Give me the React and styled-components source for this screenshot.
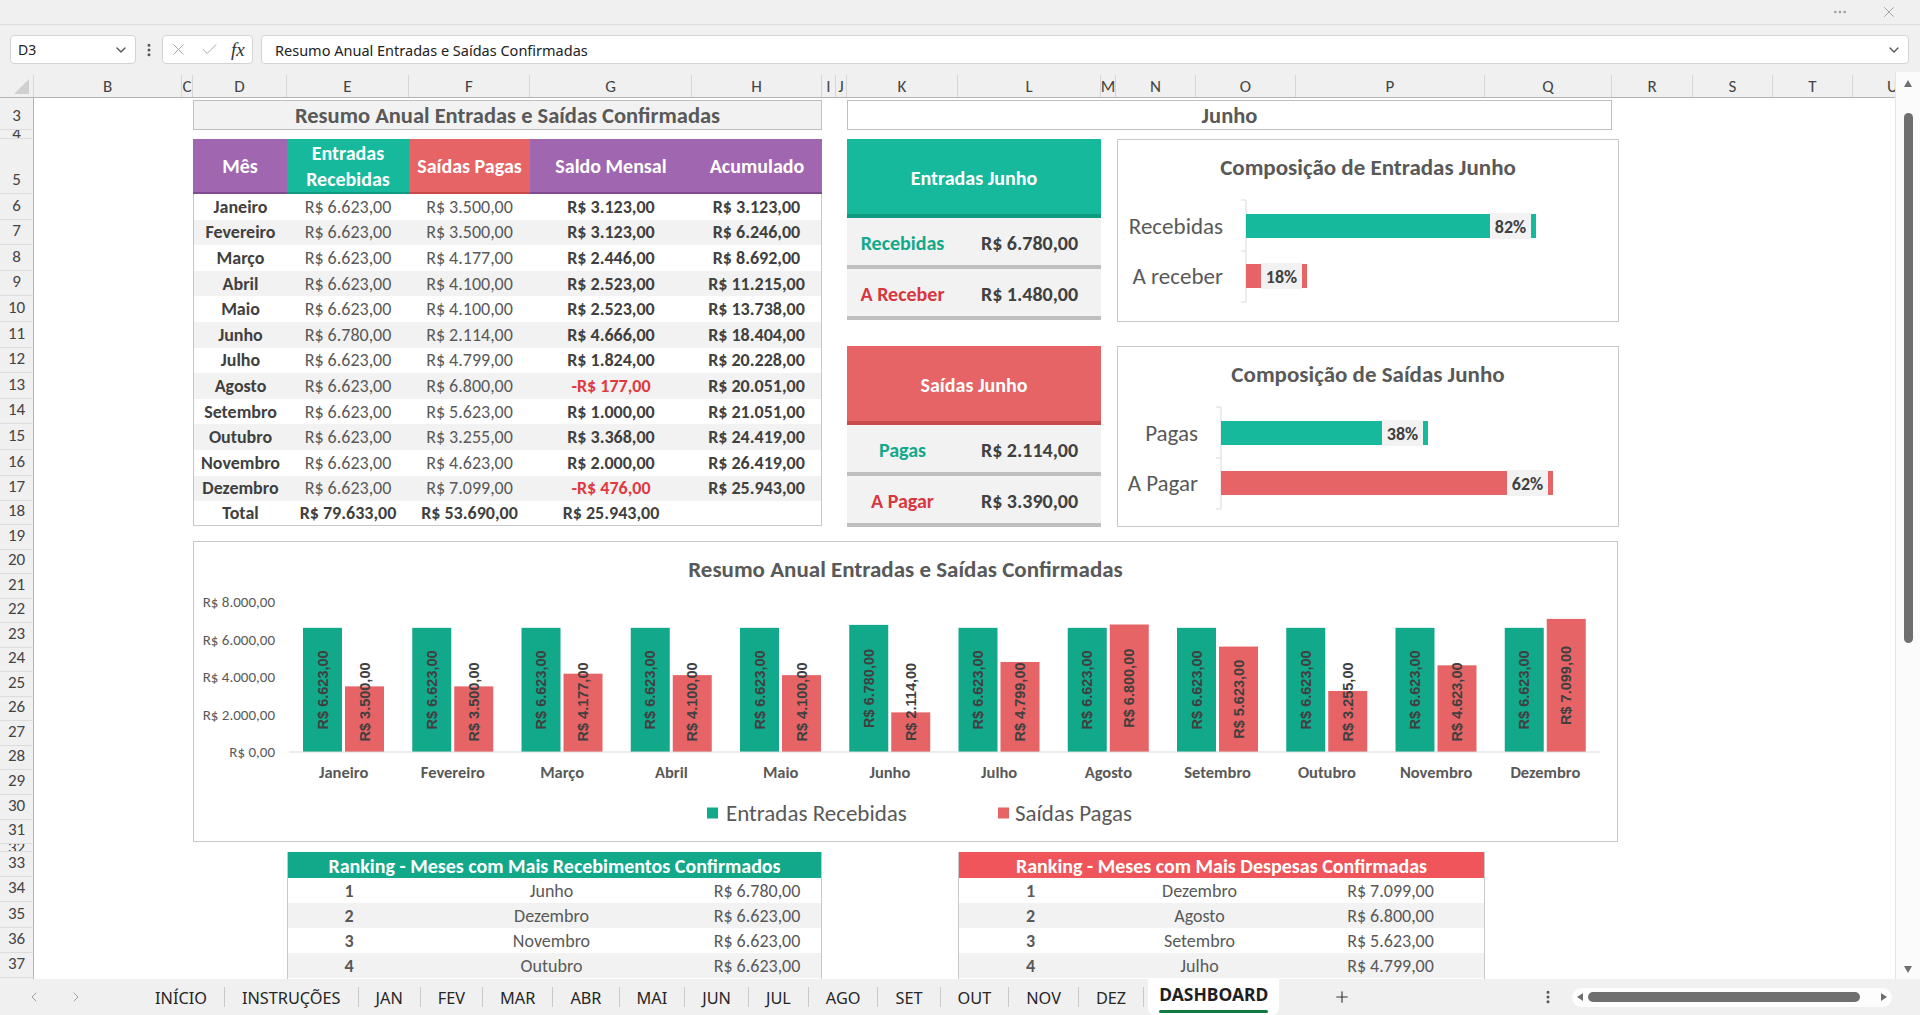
import React from "react";
import styled, { createGlobalStyle, css } from "styled-components";
import {
  ChevronDown,
  ChevronLeft,
  ChevronRight,
  X,
  Check,
  Plus,
  Ellipsis,
  EllipsisVertical,
} from "lucide-react";

const SHEET_FONT = `"Carlito", "Liberation Sans Narrow", "Liberation Sans", sans-serif`;
const UI_FONT = `"Noto Sans", "Open Sans", sans-serif`;
const LABEL_FONT = `"Liberation Sans", Arial, sans-serif`;

const TEAL = "#16b99b";
const TEAL_CHART = "#12a98b";
const RED = "#e66465";
const PURPLE = "#a066b0";
const INK = "#595959";
const INK_DARK = "#404040";
const GRAY_ROW = "#f2f2f2";
const FRAME = "#c8c8c8";

// colunas da planilha (largura em px)
const COLUMNS = [
  ["B", 148], ["C", 11], ["D", 94], ["E", 122], ["F", 121], ["G", 162], ["H", 130],
  ["I", 14], ["J", 11], ["K", 111], ["L", 143], ["M", 15], ["N", 80], ["O", 100],
  ["P", 189], ["Q", 127], ["R", 81], ["S", 80], ["T", 80], ["U", 80],
];
const COL_TEMPLATE = `34px ${COLUMNS.map(([, w]) => `${w}px`).join(" ")}`;
const col = (letter) => COLUMNS.findIndex(([l]) => l === letter) + 2;
const span = (a, b) => `${col(a)} / ${col(b) + 1}`;

// linhas visíveis (3 em diante)
const ROWS = [
  [3, 32], [4, 9], [5, 55],
  ...Array.from({ length: 12 }, (_, i) => [6 + i, 25.6]),
  [18, 24],
  ...Array.from({ length: 13 }, (_, i) => [19 + i, 24.54]),
  [32, 8],
  ...Array.from({ length: 6 }, (_, i) => [33 + i, 25.2]),
];
const ROW_TEMPLATE = ROWS.map(([, h]) => `${h}px`).join(" ");
const row = (n) => n - 2;
const rows = (a, b) => `${row(a)} / ${row(b) + 1}`;

const fmt = (n) => {
  const int = Math.floor(Math.abs(n))
    .toString()
    .replace(/\B(?=(\d{3})+(?!\d))/g, ".");
  return `${n < 0 ? "-" : ""}R$ ${int},00`;
};

const MONTHS = [
  "Janeiro", "Fevereiro", "Março", "Abril", "Maio", "Junho",
  "Julho", "Agosto", "Setembro", "Outubro", "Novembro", "Dezembro",
];
const ENTRADAS = [6623, 6623, 6623, 6623, 6623, 6780, 6623, 6623, 6623, 6623, 6623, 6623];
const SAIDAS = [3500, 3500, 4177, 4100, 4100, 2114, 4799, 6800, 5623, 3255, 4623, 7099];

const SUMMARY = MONTHS.map((m, i) => {
  const saldo = ENTRADAS[i] - SAIDAS[i];
  return { m, e: ENTRADAS[i], s: SAIDAS[i], saldo };
}).map((r, i, all) => ({
  ...r,
  acc: all.slice(0, i + 1).reduce((t, x) => t + x.saldo, 0),
}));

const TABS = [
  "INÍCIO", "INSTRUÇÕES", "JAN", "FEV", "MAR", "ABR", "MAI",
  "JUN", "JUL", "AGO", "SET", "OUT", "NOV", "DEZ",
];

const GlobalStyle = createGlobalStyle`
  html, body { margin: 0; padding: 0; }
  body { background: #f0f0f0; overflow: hidden; font-family: ${SHEET_FONT}; }
  * { box-sizing: border-box; }
`;

const placed = css`
  grid-column: ${(p) => p.$col};
  grid-row: ${(p) => p.$row};
`;

/* ---------- moldura do Excel ---------- */

const Window = styled.div`
  width: 1920px;
  height: 1015px;
  display: flex;
  flex-direction: column;
  background: #f0f0f0;
  overflow: hidden;
`;

const TitleStrip = styled.div`
  height: 25px;
  flex: none;
  display: flex;
  align-items: center;
  justify-content: flex-end;
  gap: 32px;
  padding-right: 22px;
  border-bottom: 1px solid #dcdcdc;
  color: #a0a0a0;
`;

const FormulaBar = styled.div`
  height: 47px;
  flex: none;
  display: flex;
  align-items: flex-start;
  padding: 10px 11px 0 10px;
  font-family: ${UI_FONT};
`;

const InputShell = styled.div`
  height: 29px;
  background: #fff;
  border: 1px solid #d3d3d3;
  border-radius: 4px;
  display: flex;
  align-items: center;
`;

const NameBox = styled(InputShell)`
  width: 126px;
  justify-content: space-between;
  padding: 0 6px 0 7px;
  font-size: 14px;
  color: #222;
`;

const Kebab = styled.div`
  width: 26px;
  height: 29px;
  display: flex;
  align-items: center;
  justify-content: center;
  color: #555;
`;

const FxBox = styled(InputShell)`
  width: 91px;
  gap: 12px;
  padding-left: 6px;
  color: #a8a8a8;
`;

const FxGlyph = styled.span`
  font-family: "Liberation Serif", serif;
  font-style: italic;
  font-size: 19px;
  color: #333;
`;

const FormulaInput = styled(InputShell)`
  flex: 1;
  margin-left: 8px;
  justify-content: space-between;
  padding: 0 6px 0 13px;
  font-size: 14.5px;
  color: #222;
`;

const SheetRegion = styled.div`
  flex: 1;
  min-height: 0;
  display: flex;
`;

const SheetArea = styled.div`
  flex: 1;
  min-width: 0;
  overflow: hidden;
  display: flex;
  flex-direction: column;
`;

const ColumnHeaderRow = styled.div`
  height: 26px;
  flex: none;
  display: grid;
  grid-template-columns: ${COL_TEMPLATE};
  border-bottom: 1px solid #b4b4b4;
`;

const ColumnLabel = styled.div`
  display: flex;
  align-items: center;
  justify-content: center;
  margin-top: 3px;
  border-right: 1px solid #d6d6d6;
  font-size: 17px;
  color: #444;
  overflow: hidden;
  white-space: nowrap;
`;

const CornerCell = styled.div`
  margin-top: 3px;
  border-right: 1px solid #d6d6d6;
  display: flex;
  align-items: flex-end;
  justify-content: flex-end;
  padding: 0 4px 3px 0;

  &::after {
    content: "";
    width: 15px;
    height: 15px;
    background: #d0d0d0;
    clip-path: polygon(100% 0, 100% 100%, 0 100%);
  }
`;

const SheetBody = styled.div`
  height: 881px;
  flex: none;
  display: grid;
  grid-template-columns: ${COL_TEMPLATE};
  grid-template-rows: ${ROW_TEMPLATE};
  background: #fff;
  overflow: hidden;
`;

const RowLabel = styled.div`
  ${placed};
  grid-column: 1;
  background: #f0f0f0;
  border-right: 1px solid #b4b4b4;
  border-bottom: 1px solid #dcdcdc;
  display: flex;
  align-items: ${(p) => (p.$tiny ? "flex-start" : "flex-end")};
  justify-content: center;
  padding-bottom: ${(p) => (p.$tiny ? 0 : 3)}px;
  font-size: 17px;
  line-height: ${(p) => (p.$tiny ? "8px" : "20px")};
  color: #444;
  overflow: hidden;
`;

const VScroll = styled.div`
  width: 25px;
  flex: none;
  background: #fbfbfb;
  border-left: 1px solid #e4e4e4;
  display: flex;
  flex-direction: column;
  align-items: center;
  padding: 8px 0 6px;
`;

const Triangle = styled.span`
  width: 0;
  height: 0;
  flex: none;
  ${({ $dir }) =>
    $dir === "up"
      ? css`
          border-left: 4px solid transparent;
          border-right: 4px solid transparent;
          border-bottom: 7px solid #6f6f6f;
        `
      : $dir === "down"
      ? css`
          border-left: 4px solid transparent;
          border-right: 4px solid transparent;
          border-top: 7px solid #6f6f6f;
        `
      : $dir === "left"
      ? css`
          border-top: 4px solid transparent;
          border-bottom: 4px solid transparent;
          border-right: 6px solid #6f6f6f;
        `
      : css`
          border-top: 4px solid transparent;
          border-bottom: 4px solid transparent;
          border-left: 6px solid #6f6f6f;
        `}
`;

const VThumb = styled.div`
  width: 9px;
  height: 530px;
  margin-top: 26px;
  border-radius: 5px;
  background: #6f6f6f;
`;

const Filler = styled.div`
  flex: 1;
`;

/* ---------- abas ---------- */

const TabBar = styled.div`
  height: 36px;
  flex: none;
  display: flex;
  align-items: stretch;
  font-family: ${UI_FONT};
  font-size: 16.3px;
  color: #262626;
`;

const NavGroup = styled.div`
  width: 138px;
  display: flex;
  align-items: center;
  gap: 26px;
  padding-left: 26px;
  color: #a0a0a0;
`;

const Tab = styled.div`
  display: flex;
  align-items: center;
  padding: 2px 17px 0;
  white-space: nowrap;
`;

const TabDivider = styled.span`
  width: 1px;
  height: 20px;
  align-self: center;
  background: #c9c9c9;
`;

const ActiveTab = styled.div`
  margin-left: 4px;
  padding: 0 11px;
  background: #fff;
  border-radius: 0 0 7px 7px;
  display: flex;
  flex-direction: column;
  align-items: center;
  justify-content: center;
  font-size: 17.5px;
  font-weight: 700;
  color: #1f1f1f;
`;

const ActiveUnderline = styled.span`
  width: 100%;
  height: 3px;
  margin-top: 4px;
  border-radius: 2px;
  background: #107c41;
`;

const AddTab = styled.div`
  display: flex;
  align-items: center;
  margin-left: 54px;
  color: #333;
`;

const TabKebab = styled.div`
  display: flex;
  align-items: center;
  margin-right: 16px;
  color: #555;
`;

const HScroll = styled.div`
  width: 320px;
  height: 19px;
  align-self: center;
  margin-right: 28px;
  border-radius: 10px;
  background: #fdfdfd;
  display: flex;
  align-items: center;
  justify-content: space-between;
  padding: 0 5px;
`;

const HThumb = styled.div`
  width: 272px;
  height: 10px;
  margin-right: auto;
  margin-left: 5px;
  border-radius: 5px;
  background: #6f6f6f;
`;

/* ---------- conteúdo do painel ---------- */

const SectionTitle = styled.div`
  ${placed};
  margin-top: 2px;
  background: ${(p) => p.$bg || GRAY_ROW};
  border: 1px solid #bfbfbf;
  display: flex;
  align-items: center;
  justify-content: center;
  font-size: 22.5px;
  font-weight: 700;
  color: ${INK};
`;

const SummaryWrap = styled.div`
  ${placed};
  display: flex;
  flex-direction: column;
`;

const SummaryHead = styled.div`
  height: 55px;
  display: grid;
  grid-template-columns: 94px 122px 121px 162px 1fr;
`;

const HeadCell = styled.div`
  display: flex;
  align-items: center;
  justify-content: center;
  text-align: center;
  padding-top: 1px;
  background: ${(p) => p.$bg};
  border-bottom: 4px solid ${(p) => p.$edge};
  color: #fff;
  font-size: 20px;
  font-weight: 700;
  line-height: 26px;
`;

const SummaryBody = styled.div`
  display: grid;
  grid-template-columns: 93px 122px 121px 162px 1fr;
  grid-template-rows: repeat(12, 25.6px) 24px;
  border: 1px solid ${FRAME};
  border-top: none;
`;

const DataCell = styled.div`
  display: flex;
  align-items: center;
  justify-content: center;
  white-space: nowrap;
  background: ${(p) => (p.$alt ? GRAY_ROW : "#fff")};
  font-size: 18px;
  font-weight: ${(p) => (p.$strong ? 700 : 400)};
  color: ${(p) => (p.$neg ? "#e0393e" : p.$strong ? INK_DARK : INK)};
`;

const InfoCard = styled.div`
  ${placed};
  align-self: start;
  margin-top: ${(p) => p.$top || 0}px;
  display: flex;
  flex-direction: column;
`;

const CardHeader = styled.div`
  height: 79px;
  display: flex;
  align-items: center;
  justify-content: center;
  padding-top: 3px;
  background: ${(p) => p.$bg};
  border-bottom: 4px solid ${(p) => p.$edge};
  color: #fff;
  font-size: 20px;
  font-weight: 700;
`;

const CardRow = styled.div`
  height: 51px;
  display: grid;
  grid-template-columns: 111px 1fr;
  align-items: center;
  padding-top: 3px;
  background: ${GRAY_ROW};
  border-bottom: 4px solid #bfbfbf;
  font-size: 20px;
  font-weight: 700;
`;

const CardLabel = styled.span`
  text-align: center;
  color: ${(p) => p.$tone};
`;

const CardValue = styled.span`
  text-align: center;
  color: ${INK_DARK};
`;

const ChartFrame = styled.div`
  ${placed};
  align-self: start;
  justify-self: start;
  width: ${(p) => p.$w}px;
  height: ${(p) => p.$h}px;
  margin-top: ${(p) => p.$top || 0}px;
  margin-left: ${(p) => p.$left || 0}px;
  background: #fff;
  border: 1px solid ${FRAME};
  display: flex;
  flex-direction: column;
  align-items: center;
`;

const ChartTitle = styled.div`
  height: 42px;
  flex: none;
  padding-top: 13px;
  line-height: 28px;
  font-size: 23px;
  font-weight: 700;
  color: ${INK};
  white-space: nowrap;
`;

const Plot = styled.svg`
  display: block;
  flex: none;
`;

const CategoryText = styled.text`
  font-family: ${SHEET_FONT};
  font-size: 23px;
  fill: ${INK};
`;

const PctText = styled.text`
  font-family: ${SHEET_FONT};
  font-size: 18px;
  font-weight: 700;
  fill: ${INK_DARK};
`;

const AxisText = styled.text`
  font-family: ${SHEET_FONT};
  font-size: 15px;
  fill: ${INK};
`;

const MonthText = styled.text`
  font-family: ${SHEET_FONT};
  font-size: 16.5px;
  font-weight: 700;
  fill: ${INK};
`;

const BarValue = styled.text`
  font-family: ${LABEL_FONT};
  font-size: 14.5px;
  font-weight: 700;
  fill: ${INK_DARK};
`;

const LegendText = styled.text`
  font-family: ${SHEET_FONT};
  font-size: 23px;
  fill: ${INK};
`;

const RankTable = styled.div`
  ${placed};
  display: grid;
  grid-template-columns: ${(p) => p.$cols};
  grid-template-rows: 26px repeat(4, 25px);
  align-content: start;
  border-left: 1px solid ${FRAME};
  border-right: 1px solid ${FRAME};
`;

const RankHeader = styled.div`
  grid-column: 1 / -1;
  display: flex;
  align-items: center;
  justify-content: center;
  padding-top: 1px;
  background: ${(p) => p.$bg};
  color: #fff;
  font-size: 20px;
  font-weight: 700;
  white-space: nowrap;
`;

const RankCell = styled.div`
  display: flex;
  align-items: center;
  justify-content: center;
  background: ${(p) => (p.$alt ? GRAY_ROW : "#fff")};
  font-size: 18px;
  font-weight: ${(p) => (p.$strong ? 700 : 400)};
  color: ${INK};
`;

/* ---------- partes ---------- */

const HEADS = [
  { t: "Mês", bg: PURPLE, edge: "#804c91" },
  { t: <>Entradas<br />Recebidas</>, bg: TEAL, edge: "#0f9b80" },
  { t: "Saídas Pagas", bg: RED, edge: "#c94a4a" },
  { t: "Saldo Mensal", bg: PURPLE, edge: "#804c91" },
  { t: "Acumulado", bg: PURPLE, edge: "#804c91" },
];

const SummaryTable = ({ $col, $row }) => (
  <SummaryWrap $col={$col} $row={$row}>
    <SummaryHead>
      {HEADS.map((h, i) => (
        <HeadCell key={i} $bg={h.bg} $edge={h.edge}>
          {h.t}
        </HeadCell>
      ))}
    </SummaryHead>
    <SummaryBody>
      {SUMMARY.map((r, i) => (
        <React.Fragment key={r.m}>
          <DataCell $alt={i % 2 === 1} $strong>{r.m}</DataCell>
          <DataCell $alt={i % 2 === 1}>{fmt(r.e)}</DataCell>
          <DataCell $alt={i % 2 === 1}>{fmt(r.s)}</DataCell>
          <DataCell $alt={i % 2 === 1} $strong $neg={r.saldo < 0}>
            {fmt(r.saldo)}
          </DataCell>
          <DataCell $alt={i % 2 === 1} $strong>{fmt(r.acc)}</DataCell>
        </React.Fragment>
      ))}
      <DataCell $strong>Total</DataCell>
      <DataCell $strong>{fmt(79633)}</DataCell>
      <DataCell $strong>{fmt(53690)}</DataCell>
      <DataCell $strong>{fmt(25943)}</DataCell>
      <DataCell />
    </SummaryBody>
  </SummaryWrap>
);

const MonthCard = ({ $row, $top, title, bg, edge, lines }) => (
  <InfoCard $col={span("K", "L")} $row={$row} $top={$top}>
    <CardHeader $bg={bg} $edge={edge}>{title}</CardHeader>
    {lines.map((l) => (
      <CardRow key={l.label}>
        <CardLabel $tone={l.tone}>{l.label}</CardLabel>
        <CardValue>{l.value}</CardValue>
      </CardRow>
    ))}
  </InfoCard>
);

// gráfico de barras horizontais (composição do mês)
const CompositionChart = ({ $row, $top, h, title, axisX, bars }) => (
  <ChartFrame $col={span("N", "R")} $row={$row} $top={$top} $left={1} $w={502} $h={h}>
    <ChartTitle>{title}</ChartTitle>
    <Plot width="500" height={h - 44} viewBox={`1 43 500 ${h - 44}`}>
      <line x1={axisX} y1="61" x2={axisX} y2="163" stroke="#d9d9d9" />
      {[61, 112, 163].map((y) => (
        <line key={y} x1={axisX - 5} y1={y} x2={axisX} y2={y} stroke="#d9d9d9" />
      ))}
      {bars.map((b, i) => {
        const y = 75 + i * 50;
        return (
          <g key={b.label}>
            <CategoryText x={axisX - 23} y={y + 12} textAnchor="end" dominantBaseline="central">
              {b.label}
            </CategoryText>
            <rect x={axisX} y={y} width={b.end - axisX} height="24" fill={b.color} />
            <rect x={b.end - 46} y={y - 1} width="41" height="26" fill={GRAY_ROW} />
            <PctText x={b.end - 25.5} y={y + 12.5} textAnchor="middle" dominantBaseline="central">
              {b.pct}
            </PctText>
          </g>
        );
      })}
    </Plot>
  </ChartFrame>
);

const BASE_Y = 211;
const PLOT_X = 96;
const CAT_W = 109.25;
const PX = 150 / 8000;

const ValueLabel = ({ x, v }) => {
  const cy = Math.min(BASE_Y - (v * PX) / 2, 161);
  return (
    <BarValue
      transform={`translate(${x} ${cy}) rotate(-90)`}
      textAnchor="middle"
      dominantBaseline="central"
    >
      {fmt(v)}
    </BarValue>
  );
};

const AnnualChart = ({ $row }) => (
  <ChartFrame $col={span("D", "R")} $row={$row} $top={16} $w={1425} $h={301}>
    <ChartTitle>Resumo Anual Entradas e Saídas Confirmadas</ChartTitle>
    <Plot width="1423" height="257" viewBox="1 43 1423 257">
      {[8000, 6000, 4000, 2000, 0].map((v) => (
        <AxisText key={v} x="82" y={BASE_Y - v * PX} textAnchor="end" dominantBaseline="central">
          {fmt(v)}
        </AxisText>
      ))}
      {MONTHS.map((m, i) => {
        const x0 = PLOT_X + i * CAT_W + 14;
        const he = ENTRADAS[i] * PX;
        const hs = SAIDAS[i] * PX;
        return (
          <g key={m}>
            <rect x={x0} y={BASE_Y - he} width="39" height={he} fill={TEAL_CHART} />
            <rect x={x0 + 42} y={BASE_Y - hs} width="39" height={hs} fill={RED} />
            <ValueLabel x={x0 + 19.5} v={ENTRADAS[i]} />
            <ValueLabel x={x0 + 61.5} v={SAIDAS[i]} />
            <MonthText x={PLOT_X + (i + 0.5) * CAT_W} y="231" textAnchor="middle" dominantBaseline="central">
              {m}
            </MonthText>
          </g>
        );
      })}
      <line x1={PLOT_X} y1={BASE_Y} x2={PLOT_X + 12 * CAT_W} y2={BASE_Y} stroke="#d9d9d9" />
      <rect x="514" y="266.5" width="11" height="11" fill={TEAL_CHART} />
      <LegendText x="533" y="272" dominantBaseline="central">Entradas Recebidas</LegendText>
      <rect x="805" y="266.5" width="11" height="11" fill={RED} />
      <LegendText x="822" y="272" dominantBaseline="central">Saídas Pagas</LegendText>
    </Plot>
  </ChartFrame>
);

const Ranking = ({ $col, cols, title, bg, items }) => (
  <RankTable $col={$col} $row={rows(33, 38)} $cols={cols}>
    <RankHeader $bg={bg}>{title}</RankHeader>
    {items.map(([m, v], i) => (
      <React.Fragment key={m}>
        <RankCell $alt={i % 2 === 1} $strong>{i + 1}</RankCell>
        <RankCell $alt={i % 2 === 1}>{m}</RankCell>
        <RankCell $alt={i % 2 === 1}>{fmt(v)}</RankCell>
      </React.Fragment>
    ))}
  </RankTable>
);

export default function App() {
  return (
    <>
      <GlobalStyle />
      <Window>
        <TitleStrip>
          <Ellipsis size={16} />
          <X size={18} strokeWidth={1.25} />
        </TitleStrip>

        <FormulaBar>
          <NameBox>
            D3
            <ChevronDown size={16} color="#555" />
          </NameBox>
          <Kebab>
            <EllipsisVertical size={16} strokeWidth={2.5} />
          </Kebab>
          <FxBox>
            <X size={19} strokeWidth={1.25} />
            <Check size={19} strokeWidth={1.25} />
            <FxGlyph>fx</FxGlyph>
          </FxBox>
          <FormulaInput>
            Resumo Anual Entradas e Saídas Confirmadas
            <ChevronDown size={16} color="#555" />
          </FormulaInput>
        </FormulaBar>

        <SheetRegion>
          <SheetArea>
            <ColumnHeaderRow>
              <CornerCell />
              {COLUMNS.map(([l]) => (
                <ColumnLabel key={l}>{l}</ColumnLabel>
              ))}
            </ColumnHeaderRow>

            <SheetBody>
              {ROWS.map(([n, h]) => (
                <RowLabel key={n} $row={row(n)} $tiny={h < 12}>{n}</RowLabel>
              ))}

              <SectionTitle $col={span("D", "H")} $row={row(3)}>
                Resumo Anual Entradas e Saídas Confirmadas
              </SectionTitle>
              <SectionTitle $col={span("K", "Q")} $row={row(3)} $bg="#fff">
                Junho
              </SectionTitle>

              <SummaryTable $col={span("D", "H")} $row={rows(5, 18)} />

              <MonthCard
                $row={rows(5, 10)}
                title="Entradas Junho"
                bg={TEAL}
                edge="#0f9b80"
                lines={[
                  { label: "Recebidas", tone: TEAL_CHART, value: fmt(6780) },
                  { label: "A Receber", tone: "#d9363e", value: fmt(1480) },
                ]}
              />
              <MonthCard
                $row={rows(12, 18)}
                $top={-2}
                title="Saídas Junho"
                bg={RED}
                edge="#c94a4a"
                lines={[
                  { label: "Pagas", tone: TEAL_CHART, value: fmt(2114) },
                  { label: "A Pagar", tone: "#d9363e", value: fmt(3390) },
                ]}
              />

              <CompositionChart
                $row={rows(5, 10)}
                h={183}
                title="Composição de Entradas Junho"
                axisX={129}
                bars={[
                  { label: "Recebidas", pct: "82%", end: 419, color: TEAL },
                  { label: "A receber", pct: "18%", end: 190, color: RED },
                ]}
              />
              <CompositionChart
                $row={rows(12, 18)}
                $top={-2}
                h={181}
                title="Composição de Saídas Junho"
                axisX={104}
                bars={[
                  { label: "Pagas", pct: "38%", end: 311, color: TEAL },
                  { label: "A Pagar", pct: "62%", end: 436, color: RED },
                ]}
              />

              <AnnualChart $row={rows(19, 31)} />

              <Ranking
                $col={span("E", "H")}
                cols="122px 283px 1fr"
                title="Ranking - Meses com Mais Recebimentos Confirmados"
                bg={TEAL_CHART}
                items={[["Junho", 6780], ["Dezembro", 6623], ["Novembro", 6623], ["Outubro", 6623]]}
              />
              <Ranking
                $col={span("L", "P")}
                cols="143px 195px 1fr"
                title="Ranking - Meses com Mais Despesas Confirmadas"
                bg="#ef555a"
                items={[["Dezembro", 7099], ["Agosto", 6800], ["Setembro", 5623], ["Julho", 4799]]}
              />
            </SheetBody>
          </SheetArea>

          <VScroll>
            <Triangle $dir="up" />
            <VThumb />
            <Filler />
            <Triangle $dir="down" />
          </VScroll>
        </SheetRegion>

        <TabBar>
          <NavGroup>
            <ChevronLeft size={16} strokeWidth={1.5} />
            <ChevronRight size={16} strokeWidth={1.5} />
          </NavGroup>
          {TABS.map((t) => (
            <React.Fragment key={t}>
              <Tab>{t}</Tab>
              <TabDivider />
            </React.Fragment>
          ))}
          <ActiveTab>
            DASHBOARD
            <ActiveUnderline />
          </ActiveTab>
          <AddTab>
            <Plus size={18} strokeWidth={1.5} />
          </AddTab>
          <Filler />
          <TabKebab>
            <EllipsisVertical size={16} strokeWidth={2.5} />
          </TabKebab>
          <HScroll>
            <Triangle $dir="left" />
            <HThumb />
            <Triangle $dir="right" />
          </HScroll>
        </TabBar>
      </Window>
    </>
  );
}
